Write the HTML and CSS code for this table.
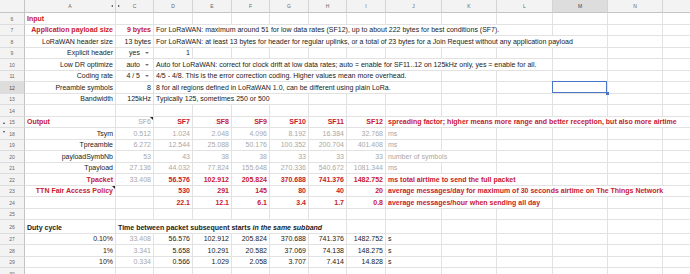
FILE: index.html
```html
<!DOCTYPE html>
<html>
<head>
<meta charset="utf-8">
<link rel="stylesheet" href="styles.css">
</head>
<body>
<div class="sheet">
  <div class="row hdr">
    <div class="corner"></div>
    <div class="ch">A<i class="hcl"></i></div>
    <div class="ch">C<i class="hcr"></i></div>
    <div class="ch">D</div><div class="ch">E</div><div class="ch">F</div><div class="ch">G</div><div class="ch">H</div><div class="ch">I</div>
    <div class="ch">J</div><div class="ch">K</div><div class="ch">L</div><div class="ch on">M</div><div class="ch">N</div><div class="ch"></div>
  </div>

  <div class="row h12">
    <div class="rh">6</div>
    <div class="c b red">Input</div>
    <div class="c"></div><div class="c"></div><div class="c"></div><div class="c"></div><div class="c"></div><div class="c"></div><div class="c"></div>
    <div class="c"></div><div class="c"></div><div class="c"></div><div class="c"></div><div class="c"></div><div class="c"></div>
  </div>

  <div class="row h11">
    <div class="rh">7</div>
    <div class="c r b red">Application payload size</div>
    <div class="c r b red">9 bytes</div>
    <div class="c s9">For LoRaWAN: maximum around 51 for low data rates (SF12), up to about 222 bytes for best conditions (SF7).</div>
    <div class="c"></div><div class="c"></div><div class="c"></div>
  </div>

  <div class="row h12">
    <div class="rh">8</div>
    <div class="c r">LoRaWAN header size</div>
    <div class="c r">13 bytes</div>
    <div class="c s10">For LoRaWAN: at least 13 bytes for header for regular uplinks, or a total of 23 bytes for a Join Request without any application payload</div>
    <div class="c"></div><div class="c"></div>
  </div>

  <div class="row h11">
    <div class="rh">9</div>
    <div class="c r">Explicit header</div>
    <div class="c r dd"><span>yes</span><i class="arr"></i></div>
    <div class="c r">1</div>
    <div class="c"></div><div class="c"></div><div class="c"></div><div class="c"></div><div class="c"></div>
    <div class="c"></div><div class="c"></div><div class="c"></div><div class="c"></div><div class="c"></div><div class="c"></div>
  </div>

  <div class="row h12">
    <div class="rh">10</div>
    <div class="c r">Low DR optimize</div>
    <div class="c r dd"><span>auto</span><i class="arr"></i></div>
    <div class="c s9">Auto for LoRaWAN: correct for clock drift at low data rates; auto = enable for SF11..12 on 125kHz only, yes = enable for all.</div>
    <div class="c"></div><div class="c"></div><div class="c"></div>
  </div>

  <div class="row h11">
    <div class="rh">11</div>
    <div class="c r">Coding rate</div>
    <div class="c r dd"><span>4 / 5</span><i class="arr"></i></div>
    <div class="c s7">4/5 - 4/8. This is the error correction coding. Higher values mean more overhead.</div>
    <div class="c"></div><div class="c"></div><div class="c"></div><div class="c"></div><div class="c"></div>
  </div>

  <div class="row h12">
    <div class="rh on">12</div>
    <div class="c r">Preamble symbols</div>
    <div class="c r">8</div>
    <div class="c s7">8 for all regions defined in LoRaWAN 1.0, can be different using plain LoRa.</div>
    <div class="c"></div><div class="c"></div><div class="c sel"></div><div class="c"></div><div class="c"></div>
  </div>

  <div class="row h11">
    <div class="rh">13</div>
    <div class="c r">Bandwidth</div>
    <div class="c r">125kHz</div>
    <div class="c s4">Typically 125, sometimes 250 or 500</div>
    <div class="c"></div><div class="c"></div><div class="c"></div><div class="c"></div><div class="c"></div><div class="c"></div><div class="c"></div><div class="c"></div>
  </div>

  <div class="row h12">
    <div class="rh">14</div>
    <div class="c"></div><div class="c"></div><div class="c"></div><div class="c"></div><div class="c"></div><div class="c"></div><div class="c"></div>
    <div class="c"></div><div class="c"></div><div class="c"></div><div class="c"></div><div class="c"></div><div class="c"></div><div class="c"></div>
  </div>

  <div class="row h11">
    <div class="rh">15<i class="hu"></i></div>
    <div class="c b red">Output</div>
    <div class="c r grey">SF6<i class="note"></i></div>
    <div class="c r b red">SF7</div><div class="c r b red">SF8</div><div class="c r b red">SF9</div>
    <div class="c r b red">SF10</div><div class="c r b red">SF11</div><div class="c r b red">SF12</div>
    <div class="c s6 b red">spreading factor; higher means more range and better reception, but also more airtime</div>
  </div>

  <div class="row h12 grey">
    <div class="rh">18<i class="hd"></i></div>
    <div class="c r ink">Tsym</div>
    <div class="c r">0.512</div><div class="c r">1.024</div><div class="c r">2.048</div><div class="c r">4.096</div>
    <div class="c r">8.192</div><div class="c r">16.384</div><div class="c r">32.768</div>
    <div class="c">ms</div>
    <div class="c"></div><div class="c"></div><div class="c"></div><div class="c"></div><div class="c"></div>
  </div>

  <div class="row h11 grey">
    <div class="rh">19</div>
    <div class="c r ink">Tpreamble</div>
    <div class="c r">6.272</div><div class="c r">12.544</div><div class="c r">25.088</div><div class="c r">50.176</div>
    <div class="c r">100.352</div><div class="c r">200.704</div><div class="c r">401.408</div>
    <div class="c">ms</div>
    <div class="c"></div><div class="c"></div><div class="c"></div><div class="c"></div><div class="c"></div>
  </div>

  <div class="row h12 grey">
    <div class="rh">20</div>
    <div class="c r ink">payloadSymbNb</div>
    <div class="c r">53</div><div class="c r">43</div><div class="c r">38</div><div class="c r">38</div>
    <div class="c r">33</div><div class="c r">33</div><div class="c r">33</div>
    <div class="c s2">number of symbols</div>
    <div class="c"></div><div class="c"></div><div class="c"></div><div class="c"></div>
  </div>

  <div class="row h11 grey">
    <div class="rh">21</div>
    <div class="c r ink">Tpayload</div>
    <div class="c r">27.136</div><div class="c r">44.032</div><div class="c r">77.824</div><div class="c r">155.648</div>
    <div class="c r">270.336</div><div class="c r">540.672</div><div class="c r">1081.344</div>
    <div class="c">ms</div>
    <div class="c"></div><div class="c"></div><div class="c"></div><div class="c"></div><div class="c"></div>
  </div>

  <div class="row h12">
    <div class="rh">22</div>
    <div class="c r b red">Tpacket</div>
    <div class="c r grey">33.408</div>
    <div class="c r b red">56.576</div><div class="c r b red">102.912</div><div class="c r b red">205.824</div>
    <div class="c r b red">370.688</div><div class="c r b red">741.376</div><div class="c r b red">1482.752</div>
    <div class="c s3 b red">ms total airtime to send the full packet</div>
    <div class="c"></div><div class="c"></div><div class="c"></div>
  </div>

  <div class="row h11">
    <div class="rh">23</div>
    <div class="c r b red">TTN Fair Access Policy<i class="note"></i></div>
    <div class="c"></div>
    <div class="c r b red">530</div><div class="c r b red">291</div><div class="c r b red">145</div>
    <div class="c r b red">80</div><div class="c r b red">40</div><div class="c r b red">20</div>
    <div class="c s6 b red">average messages/day for maximum of 30 seconds airtime on The Things Network</div>
  </div>

  <div class="row h12">
    <div class="rh">24</div>
    <div class="c"></div>
    <div class="c"></div>
    <div class="c r b red">22.1</div><div class="c r b red">12.1</div><div class="c r b red">6.1</div>
    <div class="c r b red">3.4</div><div class="c r b red">1.7</div><div class="c r b red">0.8</div>
    <div class="c s3 b red">average messages/hour when sending all day</div>
    <div class="c"></div><div class="c"></div><div class="c"></div>
  </div>

  <div class="row h11">
    <div class="rh">25</div>
    <div class="c"></div><div class="c"></div><div class="c"></div><div class="c"></div><div class="c"></div><div class="c"></div><div class="c"></div>
    <div class="c"></div><div class="c"></div><div class="c"></div><div class="c"></div><div class="c"></div><div class="c"></div><div class="c"></div>
  </div>

  <div class="row h14">
    <div class="rh">26</div>
    <div class="c b">Duty cycle</div>
    <div class="c s6 b">Time between packet subsequent starts&nbsp;<em>in the same subband</em></div>
    <div class="c"></div><div class="c"></div><div class="c"></div><div class="c"></div><div class="c"></div><div class="c"></div><div class="c"></div>
  </div>

  <div class="row h11">
    <div class="rh">27</div>
    <div class="c r">0.10%</div>
    <div class="c r grey">33.408</div>
    <div class="c r">56.576</div><div class="c r">102.912</div><div class="c r">205.824</div>
    <div class="c r">370.688</div><div class="c r">741.376</div><div class="c r">1482.752</div>
    <div class="c">s</div>
    <div class="c"></div><div class="c"></div><div class="c"></div><div class="c"></div><div class="c"></div>
  </div>

  <div class="row h12">
    <div class="rh">28</div>
    <div class="c r">1%</div>
    <div class="c r grey">3.341</div>
    <div class="c r">5.658</div><div class="c r">10.291</div><div class="c r">20.582</div>
    <div class="c r">37.069</div><div class="c r">74.138</div><div class="c r">148.275</div>
    <div class="c">s</div>
    <div class="c"></div><div class="c"></div><div class="c"></div><div class="c"></div><div class="c"></div>
  </div>

  <div class="row h11">
    <div class="rh">29</div>
    <div class="c r">10%</div>
    <div class="c r grey">0.334</div>
    <div class="c r">0.566</div><div class="c r">1.029</div><div class="c r">2.058</div>
    <div class="c r">3.707</div><div class="c r">7.414</div><div class="c r">14.828</div>
    <div class="c">s</div>
    <div class="c"></div><div class="c"></div><div class="c"></div><div class="c"></div><div class="c"></div>
  </div>

  <div class="row h12">
    <div class="rh">30</div>
    <div class="c"></div><div class="c"></div><div class="c"></div><div class="c"></div><div class="c"></div><div class="c"></div><div class="c"></div>
    <div class="c"></div><div class="c"></div><div class="c"></div><div class="c"></div><div class="c"></div><div class="c"></div><div class="c"></div>
  </div>
</div>
</body>
</html>
```

FILE: styles.css
```css
html, body {
  margin: 0;
  padding: 0;
  background: #ffffff;
}
body {
  font-family: "Liberation Sans", Arial, sans-serif;
  font-size: 7px;
  color: #222222;
}
.sheet {
  width: 690px;
  height: 274px;
  overflow: hidden;
}
.row {
  display: grid;
  grid-template-columns: 25px 91px 38px 39px 39px 38px 39px 38px 39px 56px 55px 56px 55px 55px 55px;
  box-sizing: border-box;
}
.hdr { height: 13px; }
.h11 { height: 11px; }
.h12 { height: 12px; }
.h14 { height: 14px; }

.corner {
  background: #f3f3f3;
  border-right: 1px solid #c4c4c4;
  border-bottom: 1px solid #c4c4c4;
}
.ch {
  background: #f3f3f3;
  border-right: 1px solid #d4d4d4;
  border-bottom: 1px solid #c4c4c4;
  color: #666666;
  font-size: 5px;
  display: flex;
  align-items: center;
  justify-content: center;
  position: relative;
}
.ch.on { background: #dddddd; color: #444444; }
.hcl {
  position: absolute;
  right: 2px;
  top: 5px;
  width: 0; height: 0;
  border-top: 1.5px solid transparent;
  border-bottom: 1.5px solid transparent;
  border-right: 2px solid #444444;
}
.hcr {
  position: absolute;
  left: 2px;
  top: 5px;
  width: 0; height: 0;
  border-top: 1.5px solid transparent;
  border-bottom: 1.5px solid transparent;
  border-left: 2px solid #444444;
}

.rh {
  background: #f3f3f3;
  border-right: 1px solid #c4c4c4;
  border-bottom: 1px solid #dcdcdc;
  color: #666666;
  font-size: 5px;
  display: flex;
  align-items: center;
  justify-content: center;
  position: relative;
  box-sizing: border-box;
}
.rh.on { background: #dddddd; color: #444444; }
.hu, .hd {
  position: absolute;
  left: 3px;
  width: 0; height: 0;
  border-left: 1.5px solid transparent;
  border-right: 1.5px solid transparent;
}
.hu { bottom: 3px; border-bottom: 2px solid #444444; }
.hd { top: 3px; border-top: 2px solid #444444; }

.c {
  box-sizing: border-box;
  border-right: 1px solid #e2e2e2;
  border-bottom: 1px solid #e2e2e2;
  padding: 0 2px 1px 2px;
  display: flex;
  align-items: flex-end;
  justify-content: flex-start;
  white-space: nowrap;
  line-height: 8px;
  min-width: 0;
  position: relative;
}
.r { justify-content: flex-end; }
.b { font-weight: bold; }
.red { color: #c8202e; }
.grey, .grey .c { color: #a8a8a8; }
.grey .ink { color: #222222; }
.c em { font-style: italic; }

.s2 { grid-column: span 2; }
.s3 { grid-column: span 3; }
.s4 { grid-column: span 4; }
.s6 { grid-column: span 6; }
.s7 { grid-column: span 7; }
.s9 { grid-column: span 9; }
.s10 { grid-column: span 10; }

.dd { padding-right: 4px; gap: 5px; }
.arr {
  width: 0; height: 0;
  border-left: 2px solid transparent;
  border-right: 2px solid transparent;
  border-top: 2.5px solid #777777;
  margin-bottom: 3px;
}

.note {
  position: absolute;
  right: 0;
  top: 0;
  width: 0; height: 0;
  border-left: 3px solid transparent;
  border-top: 3px solid #222222;
}

.sel::after {
  content: "";
  position: absolute;
  left: -1px;
  top: -1px;
  right: 0;
  bottom: 0;
  border: 1px solid #4a78c6;
}
.sel::before {
  content: "";
  position: absolute;
  right: -2px;
  bottom: -2px;
  width: 3px;
  height: 3px;
  background: #4a78c6;
  z-index: 2;
}
```
